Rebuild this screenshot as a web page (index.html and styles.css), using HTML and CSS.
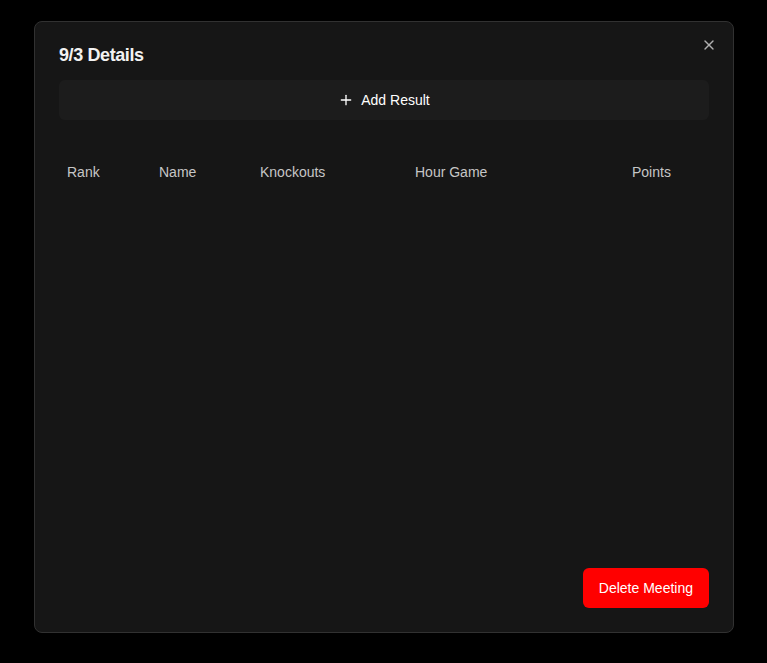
FILE: index.html
```html
<!DOCTYPE html>
<html lang="en">
<head>
<meta charset="utf-8">
<title>9/3 Details</title>
<link rel="stylesheet" href="styles.css">
</head>
<body>
<div class="backdrop">
  <div class="dialog" role="dialog">
    <h2 class="dialog-title">9/3 Details</h2>
    <button class="close-btn" aria-label="Close">
      <svg width="16" height="16" viewBox="0 0 24 24" fill="none" stroke="currentColor" stroke-width="2" stroke-linecap="round" stroke-linejoin="round"><path d="M18 6 6 18"/><path d="m6 6 12 12"/></svg>
    </button>
    <button class="add-btn">
      <svg width="16" height="16" viewBox="0 0 24 24" fill="none" stroke="currentColor" stroke-width="2" stroke-linecap="round" stroke-linejoin="round"><path d="M5 12h14"/><path d="M12 5v14"/></svg>
      <span>Add Result</span>
    </button>
    <div class="table">
      <div class="table-head">
        <div class="th">Rank</div>
        <div class="th">Name</div>
        <div class="th">Knockouts</div>
        <div class="th">Hour Game</div>
        <div class="th">Points</div>
      </div>
    </div>
    <div class="dialog-footer">
      <button class="delete-btn">Delete Meeting</button>
    </div>
  </div>
</div>
</body>
</html>
```
FILE: styles.css
```css
* { box-sizing: border-box; }
html, body {
  margin: 0;
  padding: 0;
  background: #000;
  font-family: "Liberation Sans", Arial, sans-serif;
  color: #fff;
}
.backdrop {
  width: 767px;
  height: 663px;
  padding: 21px 0 0 34px;
}
.dialog {
  position: relative;
  width: 700px;
  height: 612px;
  background: #161616;
  border: 1px solid #313131;
  border-radius: 8px;
  padding: 24px;
  display: flex;
  flex-direction: column;
}
.dialog-title {
  margin: 0;
  font-size: 18px;
  line-height: 1;
  font-weight: 700;
  letter-spacing: -0.4px;
  color: #f2f2f2;
}
.close-btn {
  position: absolute;
  top: 15px;
  right: 16px;
  width: 16px;
  height: 16px;
  padding: 0;
  border: 0;
  background: transparent;
  color: #b0b0b0;
  display: flex;
}
.add-btn {
  margin-top: 16px;
  height: 40px;
  width: 100%;
  border: 0;
  border-radius: 6px;
  background: #1c1c1c;
  color: #fff;
  font-family: inherit;
  font-size: 14px;
  display: flex;
  align-items: center;
  justify-content: center;
  gap: 7px;
}
.table {
  flex: 1;
  margin-top: 28px;
}
.table-head {
  display: grid;
  grid-template-columns: 92px 101px 155px 217px 85px;
  height: 48px;
  align-items: center;
}
.th {
  padding: 0 8px;
  font-size: 14px;
  color: #c6c6c6;
}
.dialog-footer {
  display: flex;
  justify-content: flex-end;
}
.delete-btn {
  height: 40px;
  padding: 0 16px;
  border: 0;
  border-radius: 6px;
  background: #ff0000;
  color: #fff;
  font-family: inherit;
  font-size: 14px;
}
```
